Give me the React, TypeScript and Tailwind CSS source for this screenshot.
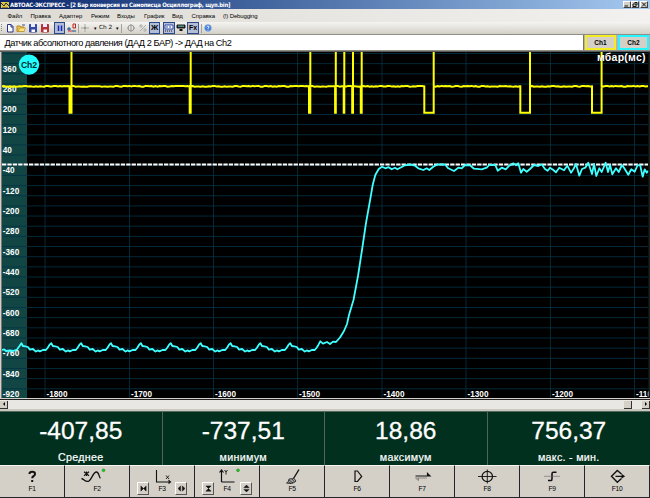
import type { ReactNode } from "react";

const verticals = [45, 129.5, 213.5, 297.5, 382, 466, 550.5, 634.5];
const horizontals = Array.from({ length: 34 }, (_, i) => 53.5 + i * 10.16);
const levels = Array.from({ length: 17 }, (_, i) => 360 - i * 80);
const pulses = [
  [69.5, 71.5], [189.7, 190.7], [309, 310.3], [335.1, 335.8], [343.7, 344.3],
  [352.2, 353], [360.8, 361.7], [424.3, 433.7], [520.3, 530], [592, 601.6],
];

const beat = [
  [0, 343.2], [1.5, 346], [4, 346.3], [6.5, 347], [8.5, 349.6], [11.5, 349], [14.5, 351.6],
  [16.5, 350.4], [18.5, 351.4], [21.5, 350], [24.5, 350], [26.5, 347.5], [28.2, 344.7],
];

const settled = [
  0, 346, 12, 356, 35, 358, 50, 353, 58, 345, 76, 345, 83, 362, 95, 353, 107, 358, 118, 347, 130, 340, 138, 346,
  145, 340, 153, 368, 160, 357, 170, 365, 180, 357, 192, 345, 205, 348, 215, 343, 225, 357, 233, 362, 240, 353,
  250, 360, 258, 367, 268, 353, 282, 361, 292, 347, 303, 368, 310, 358, 318, 342, 328, 377, 336, 357, 346, 353,
  355, 338, 366, 372, 372, 342, 379, 378, 388, 355, 395, 366, 407, 338, 414, 366, 420, 345, 427, 373, 438, 355,
  446, 366, 456, 345, 463, 355, 475, 374, 484, 358, 494, 365, 503, 345, 511, 347, 518, 380, 524, 358, 530, 368, 534, 362,
];

function pressureTrace() {
  const pts: number[][] = [[2, 350], [4, 349.3], [6, 351], [10, 350.5], [13, 351], [17, 349.5], [19.5, 346]];
  for (let k = 0; k < 10; k++) beat.forEach(([x, y]) => pts.push([21.4 + k * 29.88 + x, y]));
  pts.push(
    [320.3, 341.3], [323, 343.7], [327, 342], [330, 344], [333, 341.6], [336, 342], [340, 337.5], [344, 331], [347, 324],
    [349, 315], [353.5, 300], [358, 276], [362, 250], [366, 223], [370.7, 196.7], [372.7, 185], [375.3, 175],
    [378.7, 169], [382, 166.7], [385.3, 168.3], [388.6, 167.2], [391.7, 169.3], [395, 167.8], [397.3, 169.3],
    [401.7, 167], [405, 165.3], [410, 164.5], [415, 165.7], [418.3, 168.3], [423.3, 170], [426.7, 168.3],
    [429.3, 170], [433.3, 166.7], [437.3, 164.5], [445, 164.5], [448.3, 168.3], [454, 171], [458.3, 167.7],
    [461.7, 168.3], [465, 165],
  );
  for (let i = 0; i < settled.length; i += 2) pts.push([470 + settled[i] / 3, 50 + settled[i + 1] / 3]);
  return pts.map((p) => p.map((v) => v.toFixed(1)).join(",")).join(" ");
}

function ignitionTrace() {
  let d = "M2 86.3";
  let x = 2;
  const noiseTo = (end: number) => {
    let i = 0;
    while (x + 2 < end) {
      x += 2;
      d += `L${x.toFixed(1)} ${(86.3 + Math.sin(i * i * 1.7 + x) * 0.4).toFixed(2)}`;
      i++;
    }
  };
  pulses.forEach(([a, b]) => {
    noiseTo(a);
    d += `L${a} 86.3V112.8H${b}V52V86.1`;
    x = b;
  });
  noiseTo(648);
  return d + "H648";
}

function Plot() {
  return (
    <svg className="block h-[348px] w-[650px] shrink-0" viewBox="0 51 650 348" fontFamily="Liberation Sans, Arial, sans-serif">
      <rect x="0" y="51" width="650" height="348" fill="#000" />
      <rect x="2" y="52" width="25" height="346.5" fill="#124644" />
      <g stroke="#043448" strokeWidth="1">
        {verticals.map((x) => <line key={x} x1={x} x2={x} y1="52" y2="398" opacity=".8" />)}
        {horizontals.map((y) => <line key={y} x1="2" x2="648.5" y1={y} y2={y} opacity=".8" />)}
      </g>
      <g fill="#fff" fontSize="8.2" fontWeight="bold">
        {levels.map((v, i) => (
          <text key={v} x="2.8" y={71.7 + i * 20.33}>{v}</text>
        ))}
        {verticals.map((x, i) => <text key={x} x={x + 1.5} y="397">{-1800 + i * 100}</text>)}
      </g>
      <path d={ignitionTrace()} fill="none" stroke="#ffff00" strokeWidth="2" />
      <line x1="2" x2="648" y1="164.5" y2="164.5" stroke="#fff" strokeWidth="1.9" strokeDasharray="4.3 1.1" />
      <polyline points={pressureTrace()} fill="none" stroke="#40ffff" strokeWidth="1.8" strokeLinejoin="round" />
      <text x="597" y="61.3" fontSize="10.5" fontWeight="bold" fill="#fff" textLength="48.5">мбар(мс)</text>
      <circle cx="29" cy="64.6" r="10.2" fill="#22ffff" />
      <text x="29" y="68" fontSize="8.6" fontWeight="bold" fill="#00282c" textAnchor="middle">Ch2</text>
      <rect x="0" y="51" width="1" height="348" fill="#d4d0c8" />
      <rect x="1" y="51" width="1" height="348" fill="#777" />
      <rect x="648.5" y="51" width="1.5" height="348" fill="#17221f" />
      <rect x="0" y="51" width="650" height="1" fill="#5b5b58" />
      <rect x="0" y="398" width="650" height="1" fill="#d4d0c8" />
    </svg>
  );
}

const menu: [string, string][] = [
  ["Файл", "w-[23px]"], ["Правка", "w-[28.5px]"], ["Адаптер", "w-[32px]"], ["Режим", "w-[26px]"],
  ["Входы", "w-[27px]"], ["График", "w-[28px]"], ["Вид", "w-[19.5px]"], ["Справка", "w-[31.5px]"], ["(!) Debugging", "w-[40px] tracking-[-0.15px]"],
];

function Icon({ children, w = "w-[12px]", on = false }: { children: ReactNode; w?: string; on?: boolean }) {
  return (
    <span className={`${w} flex h-[12px] shrink-0 items-center justify-center ${on ? "border border-[#294a8c] bg-[#b3bdd5]" : ""}`}>
      {children}
    </span>
  );
}

function Glyph({ children }: { children: ReactNode }) {
  return <svg className="h-[10px] w-[10px] shrink-0" viewBox="0 0 10 10" fill="none" stroke="#222" strokeWidth="1">{children}</svg>;
}

function Disk({ color }: { color: string }) {
  return (
    <Glyph>
      <path d="M1.5 1.5H8.5V9H1.5Z" fill={color} stroke={color} />
      <path d="M3 1H7V4H3Z" fill="#e8ecff" stroke="none" />
      <path d="M3.5 6.5H7V9H3.5Z" fill="#fff" stroke="none" />
    </Glyph>
  );
}

const Divider = () => <span className="h-[9px] w-px shrink-0 bg-[#a5a299]" />;
const Arrow = () => <span className="w-[8px] shrink-0 text-center text-[5px] leading-none">▾</span>;

function Toolbar() {
  return (
    <div className="flex h-[12px] items-center overflow-hidden bg-linear-to-b from-[#f5f4f1] to-[#d3d0c7] text-black">
      <Glyph><path d="M1.5 1V9" stroke="#89867c" strokeDasharray="1 1" /></Glyph>
      <span className="-ml-[6px] flex items-center">
        <Icon w="w-[11px]"><Glyph><path d="M2.5 1.5H6L8 3.5V9H2.5ZM6 1.5V4H8" fill="#fff" stroke="#25338a" /></Glyph></Icon>
        <Icon><Glyph><path d="M1 8.5V3H4L5 4H8V8.5Z" fill="#e9c343" stroke="#b5892c" /><path d="M2 8.5L4 5H9.5L8 8.5Z" fill="#ffe282" stroke="#b5892c" strokeWidth=".6" /><path d="M6 2H9" stroke="#35508a" /></Glyph></Icon>
        <Icon><Disk color="#3549a5" /></Icon>
        <Icon w="w-[11px]"><Disk color="#b5323b" /></Icon>
        <span className="w-[4px]" />
        <Icon w="w-[11px]" on><Glyph><path d="M3.5 2.5V8M6.5 2.5V8" stroke="#1429b8" strokeWidth="1.5" /></Glyph></Icon>
        <Icon w="w-[13px]">
          <Glyph><path d="M0 6H4M2 4V8M5 8H9" stroke="#16498b" /><path d="M1 8H5" stroke="#d33" /><path d="M6 1H8.5V5H6Z" stroke="#b22" /></Glyph>
        </Icon>
      </span>
      <Divider />
      <Icon w="w-[12px]"><Glyph><path d="M5 1V9M1 5H9" stroke="#aaa79f" /><path d="M5 4V6" stroke="#777" /></Glyph></Icon>
      <Arrow />
      <span className="w-[14px] shrink-0 whitespace-nowrap font-['DejaVu_Sans'] text-[5.7px] leading-none">Ch 2</span>
      <Arrow />
      <Divider />
      <span className="flex items-center pl-[3px]">
        <Icon><Glyph><circle cx="5" cy="5" r="3" stroke="#999" /><path d="M5 1V9M1 5H3M7 5H9" stroke="#999" /></Glyph></Icon>
        <Icon><Glyph><path d="M2 8L8 2" stroke="#aaa" /><circle cx="3" cy="3" r="1.2" stroke="#aaa" /><circle cx="7" cy="7" r="1.2" stroke="#aaa" /></Glyph></Icon>
        <Icon w="w-[11px]" on><b className="text-[8px] leading-none">Ж</b></Icon>
      </span>
      <span className="ml-[3px] flex items-center">
        <Icon w="w-[12px]" on><Glyph><path d="M1 2H9V6H1Z" fill="#fff" stroke="#3048aa" /><path d="M1 8H9" stroke="#222" strokeDasharray="1 1" /><path d="M2 4H8" stroke="#3048aa" strokeDasharray="2 1" /></Glyph></Icon>
        <Icon w="w-[12px]"><Glyph><path d="M1 2H9V5H1Z" fill="#111" /><path d="M2 3.2H8" stroke="#76cccc" /><path d="M3.5 7H6.5" stroke="#111" strokeWidth="2" /></Glyph></Icon>
        <Icon w="w-[12px]" on><b className="pb-[2px] text-[7px] leading-none">Fx</b></Icon>
      </span>
      <span className="w-[2px]" />
      <Divider />
      <Icon w="w-[11px]">
        <Glyph><circle cx="5" cy="5" r="3.4" fill="#3d79d5" stroke="#9abce8" strokeWidth=".6" /><path d="M3.6 4Q5 2 6.2 3.7Q6.3 4.5 5 5.2V6M5 6.7V7.5" stroke="#fff" strokeWidth=".9" /></Glyph>
      </Icon>
    </div>
  );
}

function WinButton({ d }: { d: string }) {
  return (
    <span className="flex h-[7px] w-[8px] border border-t-white border-r-[#404040] border-b-[#404040] border-l-white bg-[#d4d0c8]">
      <svg className="h-[5px] w-[6px]" viewBox="0 0 6 5"><path d={d} fill="none" stroke="#000" strokeWidth=".9" /></svg>
    </span>
  );
}

const readings = [
  ["-407,85", "Среднее"], ["-737,51", "минимум"], ["18,86", "максимум"], ["756,37", "макс. - мин."],
];

function MiniButton({ d }: { d: string }) {
  return (
    <span className="flex h-[13px] w-[12px] shrink-0 items-center justify-center border border-t-white border-r-[#555] border-b-[#555] border-l-white bg-[#d4d0c8]">
      <svg className="h-[7px] w-[7px]" viewBox="0 0 8 8"><path d={d} fill="#111" stroke="#111" strokeWidth=".5" /></svg>
    </span>
  );
}

const keyIcons: ReactNode[] = [
  <path key="1" d="M12.4 5Q12.6 2.7 15.2 2.7Q18 2.7 18 5Q18 6.3 16.5 7.1Q15.2 8 15.2 9.3M15.2 11V13" strokeWidth="2" />,
  <g key="2">
    <path d="M4.5 2.5V7M2 2.7L7 6.8M2 6.8L7 2.7" strokeWidth="1.1" />
    <path d="M-.5 9.5C2 10 4 14 7 12S11 3 14.5 3C17 3 17 8.5 18.5 9.3" strokeWidth="1.3" />
    <circle cx="21.5" cy="1.3" r="1.4" fill="#13d51b" stroke="#27861c" strokeWidth=".6" />
  </g>,
  <g key="3"><path d="M9.5 1V13H23.5M21.5 11.2L23.5 13L21.5 14.5" strokeWidth="1.1" /><path d="M19 6.5L22 10M22 6.5L19 10" /></g>,
  <g key="4">
    <path d="M9.5 13V1M7.5 3.5L9.5 1L11.5 3.5M9.5 13H22.5" strokeWidth="1.2" /><path d="M12.5 1L14 3L15.5 1M14 3V5.5" />
    <circle cx="26" cy="1.3" r="1.4" fill="#13d51b" stroke="#27861c" strokeWidth=".6" />
  </g>,
  <g key="5"><path d="M22 .5L16.5 9.5" strokeWidth="1.4" /><path d="M12 10L17 9.5L19 12Q16 15.5 9.5 14Q12 13 12 10Z" fill="#aaa" strokeWidth=".8" /><path d="M12 11L16 14M15 10L17.5 13M11.5 13L14 14.5" strokeWidth=".7" /></g>,
  <path key="6" d="M13 2H15.5L19.7 7.5L15.5 12.5H13Z" strokeWidth="1.2" />,
  <g key="7"><path d="M8.5 7H23L20.5 4.5V7Z" fill="#111" strokeWidth="1.2" /><path d="M8.5 9H20M8.5 9L11.5 11.5V9" stroke="#77736d" strokeWidth=".8" /></g>,
  <g key="8"><circle cx="15.3" cy="7.5" r="5.2" strokeWidth="1.2" /><path d="M6 7.5H24.5M15.3 .5V14.5" strokeWidth=".9" /></g>,
  <g key="9"><path d="M11 11.5H14Q15 11.5 15 9.5V5Q15 3.3 16 3.3H19.5" strokeWidth="1.6" /><path d="M7 7.3H23" stroke="#666" strokeWidth=".6" /></g>,
  <g key="10"><path d="M19.5 5L15.3 1.5L9.5 7.3L15.3 13.2L19.5 9.5" strokeWidth="1.4" /><path d="M13.5 7.3H22M19.5 5.5L22 7.3L19.5 9" strokeWidth="1.3" /></g>,
];

function KeyButton({ index }: { index: number }) {
  const side = index === 2
    ? ["M1 1L4 4L1 7ZM7 1L4 4L7 7Z", "M3 1L0 4L3 7ZM5 1L8 4L5 7Z"]
    : index === 3
      ? ["M1 1H7L4 4ZM1 7H7L4 4Z", "M1 3L4 0L7 3ZM1 5L4 8L7 5Z"]
      : null;
  return (
    <div className="flex h-[33px] w-[65px] shrink-0 items-end justify-center border-t border-r border-b border-t-[#f7f5f0] border-r-[#24232b] border-b-[#24232b] bg-[#d4d0c8] pb-[2px]">
      {side && <MiniButton d={side[0]} />}
      <div className="flex w-[26px] flex-col items-center">
        <svg className="h-[15px] w-[31px] shrink-0 overflow-visible" viewBox="0 0 31 15" fill="none" stroke="#111" strokeWidth=".9">{keyIcons[index]}</svg>
        <span className="h-[11px] text-[6.7px] leading-[9px] tracking-[-0.3px]">F{index + 1}</span>
      </div>
      {side && <MiniButton d={side[1]} />}
    </div>
  );
}

export default function App() {
  return (
    <main className="flex h-[498px] w-[650px] flex-col overflow-hidden bg-[#d4d0c8] font-['Liberation_Sans',Arial,sans-serif] text-black">
      <header className="flex h-[9px] shrink-0 items-center bg-linear-to-r from-[#0a246a] to-[#a6caf0] pr-px">
        <svg className="ml-[1px] h-[8px] w-[8px]" viewBox="0 0 8 8"><rect y="1" width="8" height="6" fill="#e0c744" /><path d="M0 2L3 5L5 2L8 5M1 7H7" fill="none" stroke="#292929" /></svg>
        <h1 className="ml-[1px] w-[613px] whitespace-nowrap font-['DejaVu_Sans_Condensed','DejaVu_Sans',sans-serif] text-[6px] leading-[9px] font-bold tracking-[-0.29px] text-white">АВТОАС-ЭКСПРЕСС - [2 Бар конверсия из Самописца Осциллограф, щуп.bin]</h1>
        <WinButton d="M.5 4H4" />
        <WinButton d="M2.5 .5H5V3M1 2H4V4.5H1Z" />
        <span className="w-px" />
        <WinButton d="M1 .5L5 4.5M5 .5L1 4.5" />
      </header>
      <nav className="flex h-[13px] shrink-0 items-center bg-linear-to-r from-[#dedbd4] to-[#f2f1ef] pl-[7.5px]">
        {menu.map(([name, width]) => <span key={name} className={`${width} shrink-0 whitespace-nowrap text-[6px] leading-[12px]`}>{name}</span>)}
      </nav>
      <Toolbar />
      <div className="flex h-[17px] shrink-0 border-t border-b border-[#908d88] bg-white">
        <div className="w-[583px] whitespace-nowrap pl-[4.5px] text-[9.2px] leading-[16px] tracking-[-0.44px]">Датчик абсолютного давления (ДАД 2 БАР) -&gt; ДАД на Ch2</div>
        <div className="flex flex-1 gap-[2px] border-l border-[#77736d] bg-[#b5b2b5] pr-px pl-px">
          <b className="w-[31px] border-2 border-[#f5ed24] bg-[#d4d0c8] text-center text-[6.5px] leading-[11px]">Ch1</b>
          <b className="w-[31px] border-2 border-[#27f5ff] bg-[#d4d0c8] text-center text-[6.5px] leading-[11px]">Ch2</b>
        </div>
      </div>
      <Plot />
      <div className="flex h-[10px] shrink-0 items-center border-t border-[#222] bg-[#e9e7e3]">
        <span className="flex h-[8px] w-[8px] items-center justify-center border-r border-b border-[#333] bg-[#d4d0c8]"><svg className="h-[4px] w-[4px]" viewBox="0 0 4 4"><path d="M3 0V4L1 2Z" /></svg></span>
        <span className="w-[616px]" />
        <span className="h-[8px] w-[8px] border-r border-b border-[#333] bg-[#d4d0c8]" />
        <span className="w-[10px]" />
        <span className="flex h-[8px] w-[8px] items-center justify-center border-r border-b border-[#333] bg-[#d4d0c8]"><svg className="h-[4px] w-[4px]" viewBox="0 0 4 4"><path d="M1 0V4L3 2Z" /></svg></span>
      </div>
      <div className="h-[3px] shrink-0 border-b border-[#526a5e] bg-[#cbc8bf]" />
      <section className="flex h-[53px] shrink-0 bg-[#02301e] text-white">
        {readings.map(([value, label]) => (
          <div key={label} className="flex w-[162.5px] flex-col items-center border-r border-[#50645b] last:border-0">
            <span className="h-[38px] text-[24.5px] leading-[38px] [-webkit-text-stroke:0.3px_white]">{value}</span>
            <span className="text-[10.7px] leading-[15px] tracking-[0.3px] [-webkit-text-stroke:0.2px_white]">{label}</span>
          </div>
        ))}
      </section>
      <footer className="flex h-[33px] shrink-0">
        {keyIcons.map((_, i) => <KeyButton key={i} index={i} />)}
      </footer>
    </main>
  );
}
